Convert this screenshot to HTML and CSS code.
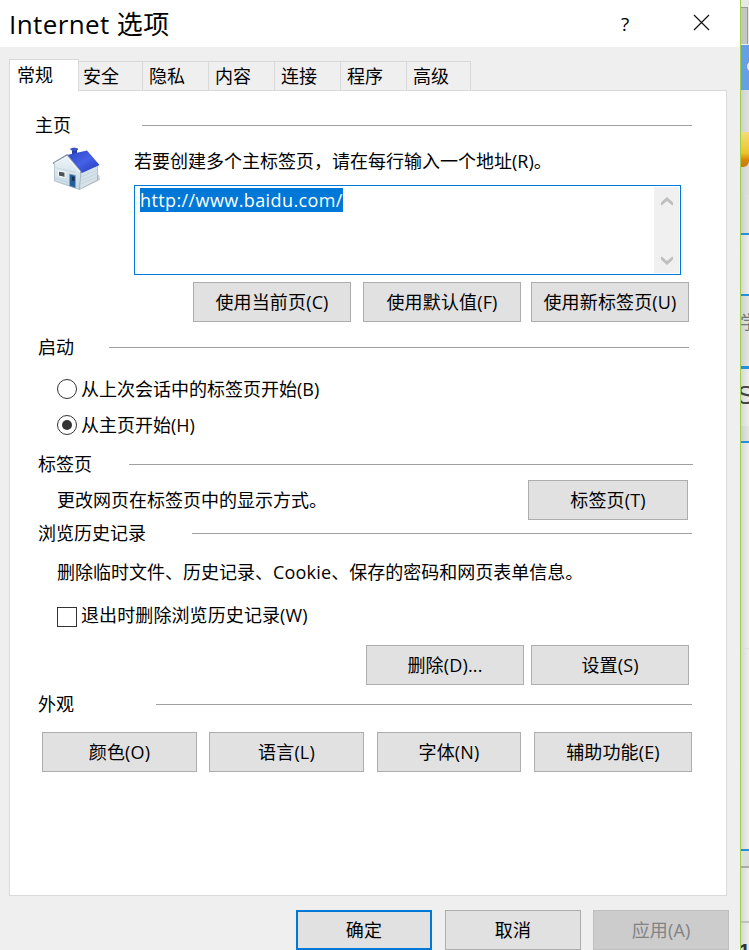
FILE: index.html
```html
<!DOCTYPE html>
<html lang="zh-CN">
<head>
<meta charset="utf-8">
<title>Internet 选项</title>
<link rel="stylesheet" href="styles.css">
</head>
<body>
<div class="screen">
  <main class="dialog">
    <header class="titlebar">
      <h1>Internet 选项</h1>
      <span class="help">?</span>
      <svg class="close" width="17" height="17" viewBox="0 0 17 17"><path d="M1 1 16 16M16 1 1 16" stroke="#111" stroke-width="1.2" fill="none"/></svg>
    </header>
    <nav class="tabs">
      <a class="tab active">常规</a><a class="tab">安全</a><a class="tab">隐私</a><a class="tab">内容</a><a class="tab">连接</a><a class="tab">程序</a><a class="tab">高级</a>
    </nav>
    <div class="panel">
      <h2 class="head home-head"><span>主页</span></h2>
      <section class="home">
        <svg class="house" width="50" height="46" viewBox="0 0 50 46">
          <defs>
            <linearGradient id="roof" x1="0" y1="0" x2="1" y2="1"><stop offset="0" stop-color="#2a45c4"/><stop offset=".5" stop-color="#4660e6"/><stop offset="1" stop-color="#2039bc"/></linearGradient>
            <linearGradient id="wall" x1="0" y1="0" x2="0" y2="1"><stop offset="0" stop-color="#edf4f9"/><stop offset="1" stop-color="#c3d6e1"/></linearGradient>
          </defs>
          <path d="M28 43 49 33 48 28 40 28z" fill="#c9cccf"/>
          <path d="M3.500 16 16 9 30 25 28.500 42.500 3.500 34z" fill="url(#wall)" stroke="#92a6b4" stroke-width=".6"/>
          <path d="M30 25 46.500 18 46.500 33 28.500 42.500z" fill="#d6e2ea" stroke="#92a6b4" stroke-width=".6"/>
          <path d="M30 30 46 23M30 33.500 46 26.500M29.500 37 46 30M4 20.500 25 25.500M4 31 17 35.500" stroke="#bccbd5" stroke-width=".6"/>
          <path d="M21 2h5v6h-5z" fill="#2740ac"/><path d="M19.500 1.500 23 .5 27 1.500V3l-4 1-3.500-1z" fill="#3c54bc"/>
          <path d="M16 8 36 3.500 48.500 18 31 26z" fill="url(#roof)"/>
          <path d="M2 16.500 16 8 30.500 26" fill="none" stroke="#8294a8" stroke-width="1.600"/>
          <path d="M3.500 16.500 16 9.500 29 25" fill="none" stroke="#f8fbfd" stroke-width="1.200"/>
          <path d="M7.500 24 14 25.200V30.500L7.500 29z" fill="#4c555e" stroke="#fff"/>
          <path d="M18.500 27 24.500 28.500V41L18.500 39z" fill="#235c9a" stroke="#8ba5b9" stroke-width=".8"/>
          <path d="M21 29.500 23.500 30V34L21 33.500z" fill="#1b3044"/>
        </svg>
        <div class="home-main">
          <p class="hint">若要创建多个主标签页，请在每行输入一个地址(R)。</p>
          <div class="textarea">
            <span class="selected">http://www.baidu.com/</span>
            <div class="scroll">
              <svg width="12" height="9" viewBox="0 0 12 9"><path d="M.5 8V5.500L6 .5l5.500 5V8L6 3.500z" fill="#bfbfbf" stroke="#bfbfbf"/></svg>
              <svg width="12" height="9" viewBox="0 0 12 9"><path d="M.5 1v2.500L6 8.500l5.500-5V1L6 5.500z" fill="#bfbfbf" stroke="#bfbfbf"/></svg>
            </div>
          </div>
          <div class="home-buttons"><button>使用当前页(C)</button><button>使用默认值(F)</button><button>使用新标签页(U)</button></div>
        </div>
      </section>
      <h2 class="head start-head"><span>启动</span></h2>
      <section class="start">
        <label><i class="radio"></i>从上次会话中的标签页开始(B)</label>
        <label><i class="radio checked"></i>从主页开始(H)</label>
      </section>
      <h2 class="head tabs-head"><span>标签页</span></h2>
      <section class="tabs-row"><p>更改网页在标签页中的显示方式。</p><button>标签页(T)</button></section>
      <h2 class="head history-head"><span>浏览历史记录</span></h2>
      <section class="history">
        <p>删除临时文件、历史记录、<b class="latin">Cookie</b>、保存的密码和网页表单信息。</p>
        <label><i class="check"></i><span>退出时删除浏览历史记录(W)</span></label>
        <div class="history-buttons"><button>删除(D)...</button><button>设置(S)</button></div>
      </section>
      <h2 class="head look-head"><span>外观</span></h2>
      <section class="look"><button>颜色(O)</button><button>语言(L)</button><button>字体(N)</button><button>辅助功能(E)</button></section>
    </div>
    <footer class="actions"><button class="primary">确定</button><button>取消</button><button class="disabled" disabled>应用(A)</button></footer>
  </main>
  <aside class="backdrop">
    <div class="b-top"></div><div class="b-frame"></div><div class="b-blue"><i></i></div><div class="b-gold"><i></i></div><div class="b-plain"></div>
    <div class="b-light"></div><div class="b-study">学</div><div class="b-s">S</div><div class="b-gap"></div><div class="b-long"></div><div class="b-long2"></div>
    <div class="b-grey"></div><div class="b-low"></div><div class="b-one">1</div>
  </aside>
</div>
</body>
</html>
```
FILE: styles.css
```css
* { box-sizing: border-box; }
body { margin: 0; overflow: hidden; color: #000; font: 18px/27px "Open Sans", "Noto Sans CJK SC", sans-serif; }
h1, h2, p { margin: 0; font-weight: 400; white-space: nowrap; }
button { height: 40px; padding: 0; border: 1px solid #adadad; background: #e1e1e1; color: #000; font: inherit; line-height: 36px; letter-spacing: .15px; white-space: nowrap; }
.screen { display: flex; width: 749px; height: 950px; overflow: hidden; }
.dialog { width: 741px; height: 950px; flex: none; border-right: 1px solid #9bcf47; background: #efefef; }

.titlebar { display: flex; height: 47px; background: #fff; align-items: center; }
.titlebar h1 { width: 612px; padding-left: 9px; font-size: 26px; line-height: 46px; letter-spacing: .4px; }
.help { width: 81px; padding-left: 9px; font-size: 19px; line-height: 44px; }
.close { margin-bottom: 2px; }

.tabs { display: flex; height: 43px; padding: 12px 0 0 9px; align-items: flex-end; }
.tab { width: 66px; height: 29px; padding-left: 6px; border: solid #d9d9d9; border-width: 1px 1px 0 0; line-height: 29px; }
.tab.active { position: relative; z-index: 1; width: 70px; height: 32px; margin-bottom: -1px; padding-left: 7px; border-left-width: 1px; background: #fff; line-height: 31px; }
.tab:nth-child(2) { width: 64px; padding-left: 4px; }
.tab:last-child { width: 64px; }

.panel { width: 718px; height: 806px; margin-left: 9px; padding: 21px 0 0; border: 1px solid #d9d9d9; background: #fff; }
.head { display: flex; height: 27px; padding: 0 34px 0 28px; align-items: center; font-size: 18px; line-height: 27px; }
.head::after { content: ""; height: 1px; flex: 1; background: #a0a0a0; }
.home-head { padding-left: 25px; }
.home-head span { width: 107px; }
.start-head { padding-right: 37px; }
.start-head span { width: 71px; }
.tabs-head { padding-right: 33px; }
.tabs-head span { width: 91px; }
.history-head span { width: 154px; }
.look-head span { width: 118px; }

.home { display: flex; height: 195px; padding: 8px 0 0 41px; }
.house { margin-right: 33px; flex: none; }
.hint { height: 38px; line-height: 29px; }
.textarea { display: flex; width: 547px; height: 90px; padding: 1px; border: 1px solid #0078d7; justify-content: space-between; }
.selected { width: 203px; height: 24px; margin: 1px 0 0 4px; background: #0078d7; color: #fff; line-height: 24px; letter-spacing: .4px; }
.scroll { display: flex; width: 25px; padding: 10px 0 8px; flex-direction: column; align-items: center; justify-content: space-between; background: #f0f0f0; }
.home-buttons { display: flex; padding: 7px 0 0 59px; }
.home-buttons button { width: 158px; margin-right: 12px; }
.home-buttons button:nth-child(2) { margin-right: 10px; }

.start { height: 90px; padding: 10px 0 0 47px; }
label { display: flex; height: 36px; align-items: center; white-space: nowrap; }
.radio { display: flex; width: 20px; height: 20px; margin-right: 4px; border: 1px solid #333; border-radius: 50%; align-items: center; justify-content: center; }
.radio.checked::after { content: ""; width: 10px; height: 10px; border-radius: 50%; background: #333; }
.tabs-row { display: flex; height: 42px; padding: 2px 38px 0 47px; justify-content: space-between; align-items: center; }
.tabs-row button { width: 160px; }
.history { height: 144px; padding: 12px 0 0 47px; }
.history p { height: 39px; }
.latin { font-weight: 400; letter-spacing: .2px; }
.check { width: 20px; height: 20px; margin: 2px 4px 0 0; border: 1px solid #333; }
.history label span { margin-top: -2px; letter-spacing: .1px; }
.history-buttons { display: flex; padding: 11px 0 0 309px; gap: 7px; }
.history-buttons button { width: 158px; }
.look { display: flex; padding: 14px 0 0 32px; gap: 12px; }
.look button { width: 155px; }
.look button:nth-child(3) { width: 144px; margin: 0 1px; }
.look button:nth-child(4) { width: 158px; }

.actions { display: flex; padding: 14px 0 0 296px; }
.actions button { width: 136px; margin-right: 13px; }
.actions button:nth-child(2) { margin-right: 12px; }
.actions .primary { border: 2px solid #0078d7; }
.actions .disabled { margin: 0; border-color: #bfbfbf; background: #ccc; color: #838383; }

.backdrop { width: 8px; height: 950px; overflow: hidden; background: #ebebeb; }
.backdrop div { overflow: hidden; }
.b-top { height: 7px; background: #e8e8e8; }
.b-frame { width: 7px; height: 37px; border: solid #999; border-width: 1px 1px 0 0; background: #c5c5c5; }
.b-blue { height: 46px; padding: 16px 0 0 6px; border-top: 1px solid #eee; background: #659fe5; }
.b-blue i { display: block; width: 12px; height: 11px; border-radius: 50%; background: #eee; }
.b-gold { height: 105px; padding-top: 42px; background: linear-gradient(90deg, #d1d1d1, #dfe1e1); }
.b-gold i { display: block; width: 8px; height: 35px; border-radius: 0 0 6px 0; background: linear-gradient(#f1dc79, #ecc52b 60%, #d98308 80%, #c77b0d); }
.b-plain { height: 40px; border: solid #2290dc; border-width: 0 0 2px; background: linear-gradient(90deg, #cfcfcf, #e3e5e5); }
.b-light { height: 61px; border-bottom: 2px solid #2290dc; background: linear-gradient(90deg, #d7d7d7, #eee); }
.b-study { height: 73px; padding-top: 13px; border-bottom: 3px solid #2290dc; background: linear-gradient(90deg, #d0d0d0, #e4e6e6); color: #777; text-indent: -1px; }
.b-s { height: 57px; padding-top: 12px; background: linear-gradient(90deg, #d7d7d7, #eee); color: #444; font: 26px/28px "Liberation Sans", sans-serif; text-indent: -4px; }
.b-gap { height: 17px; border-bottom: 2px solid #2290dc; background: linear-gradient(90deg, #cfcfcf, #e4e6e6); }
.b-long { height: 206px; border-bottom: 1px solid #ddd; background: linear-gradient(90deg, #d7d7d7, #eee); }
.b-long2 { height: 202px; border-bottom: 2px solid #2290dc; background: linear-gradient(90deg, #d7d7d7, #eee); }
.b-grey { height: 17px; border-bottom: 2px solid #aaa; background: #dcdddd; }
.b-low { height: 55px; border-bottom: 2px solid #c0c0c0; background: linear-gradient(90deg, #d7d7d7, #eee); }
.b-one { height: 27px; padding-top: 16px; background: linear-gradient(90deg, #d7d7d7, #eee); color: #333; font: bold 20px/24px "Liberation Sans", sans-serif; text-indent: -2px; }
```
